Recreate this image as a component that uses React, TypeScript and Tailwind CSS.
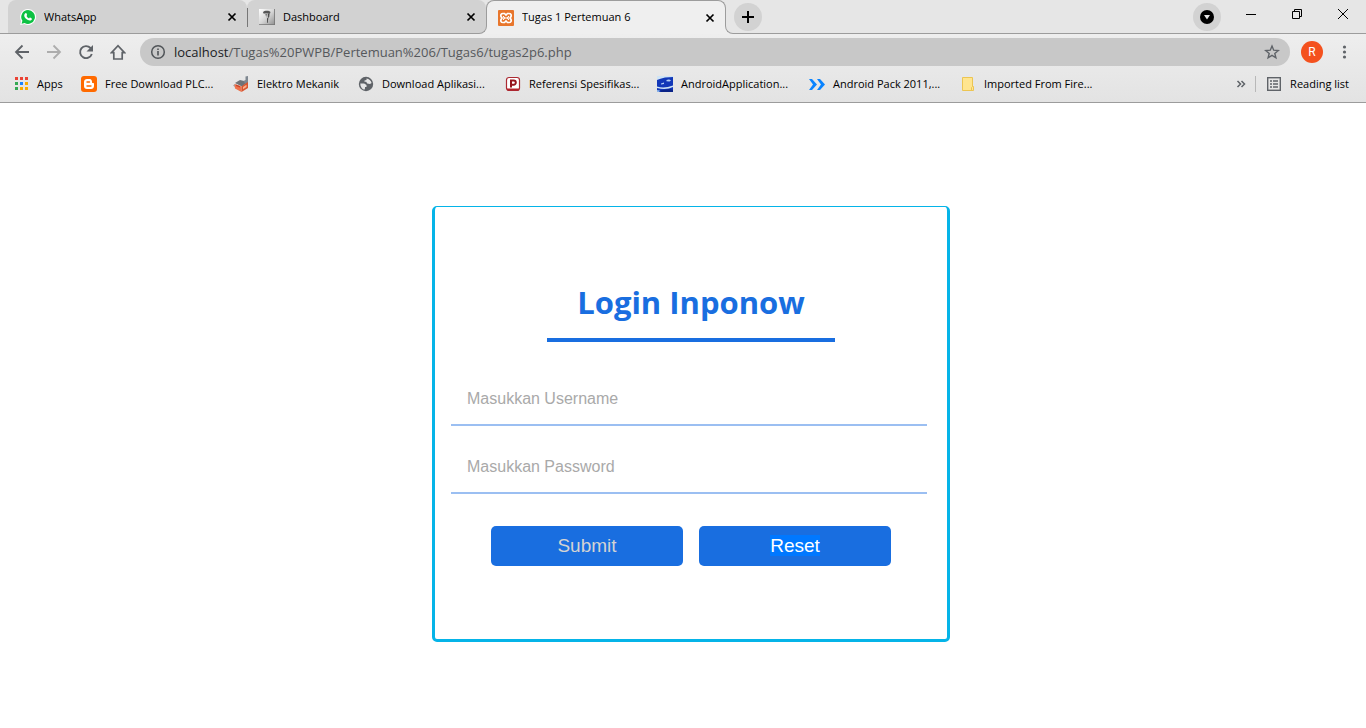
import type { ReactNode } from "react";

const ui = "font-['Open_Sans','Noto_Sans',sans-serif]";

function WhatsAppIcon() {
  return (
    <svg className="size-4" viewBox="0 0 16 16" aria-hidden="true">
      <path d="M8 0a8 8 0 1 1-3.6 15.1L.2 16l1-4A8 8 0 0 1 8 0Z" fill="#fff" />
      <path d="M8 1.1a6.9 6.9 0 1 1-3.4 12.9L1.6 14.7l.8-2.9A6.9 6.9 0 0 1 8 1.1Z" fill="#0dc143" />
      <path d="M5.4 4.3c.4-.3.9-.3 1.1.1l.6 1.4c.1.4-.5.9-.6 1.2.5 1.1 1.4 1.9 2.5 2.4.4-.1.8-.9 1.2-.8l1.5.8c.4.3.1 1.2-.3 1.6-.9.8-2.2.7-3.5.1-1.7-.8-3-2.2-3.6-3.8-.3-1.2.2-2.4 1.1-3Z" fill="#fff" />
    </svg>
  );
}

function DashboardIcon() {
  return (
    <svg className="size-4" viewBox="0 0 16 16" aria-hidden="true">
      <defs>
        <linearGradient id="portrait" x1="0" y1="0" x2="1" y2="1">
          <stop offset="0" stopColor="#fff" />
          <stop offset="0.5" stopColor="#d5d5d5" />
          <stop offset="1" stopColor="#8d8d8d" />
        </linearGradient>
      </defs>
      <path d="M0 0h16v16H0z" fill="url(#portrait)" />
      <path d="M4 3.2C5 1.6 10 1.200 11.500 3L11 4.800 4.500 4.500Z" fill="#555" />
      <path d="M6 4.600h4.500L10.200 8 8.500 10 7 7.500Z" fill="#b5b5b5" />
      <path d="M9 4.600h1.500L10.200 8l-1 1ZM6.500 5.500H8v.8H6.500ZM8 9l1.500.5L9 11v3l-.8-.5Z" fill="#444" />
      <path d="M0 15.200h16v.8H0zM15.200 0h.8v16h-.8z" fill="#777" />
    </svg>
  );
}

function XamppIcon() {
  return (
    <svg className="size-4" viewBox="0 0 16 16" aria-hidden="true">
      <rect width="16" height="16" rx="1" fill="#e8762c" />
      <path d="M5 3.500h1.500L8 5l1.500-1.500H11c2 0 2.500 1.500 2 3L12 8l1 1.500c.5 1.500 0 3-2 3H9.500L8 11l-1.500 1.500H5c-2 0-2.500-1.500-2-3L4 8 3 6.500c-.5-1.500 0-3 2-3Z" fill="none" stroke="#fff" strokeWidth="1.700" />
      <path d="M5.500 6v1l1.500 1-1.500 1v1M10.500 6v1L9 8l1.500 1v1M7 8h2" fill="none" stroke="#fff" strokeWidth="1.100" />
    </svg>
  );
}

function CloseIcon() {
  return (
    <svg className="size-4" viewBox="0 0 16 16" fill="none" stroke="#000" strokeWidth="1.700" aria-hidden="true">
      <path d="m4.500 4.500 7 7m0-7-7 7" />
    </svg>
  );
}

function Tab({ icon, title, active }: { icon: ReactNode; title: string; active?: boolean }) {
  return (
    <div
      className={
        active
          ? "relative z-10 -mb-px flex h-[34px] w-[240px] min-w-0 items-center rounded-t-lg border-x border-t border-[#9c9c9c] bg-[#efefef] pl-[11px] pr-[7px]"
          : "flex h-[33px] w-[239px] min-w-0 items-center rounded-t-lg bg-[#d2d2d2] pl-3 pr-[7px] pt-px"
      }
    >
      {active && (
        <>
          <span className="absolute -left-[9px] bottom-0 size-[9px] bg-[#efefef]">
            <span className="block size-full rounded-br-lg border-b border-r border-[#9c9c9c] bg-[#d2d2d2]" />
          </span>
          <span className="absolute -right-[9px] bottom-0 size-[9px] bg-[#efefef]">
            <span className="block size-full rounded-bl-lg border-b border-l border-[#9c9c9c] bg-[#e6e6e6]" />
          </span>
        </>
      )}
      {icon}
      <span className="ml-2 flex-1 truncate text-[11px]">{title}</span>
      <button type="button" aria-label={"Close " + title}>
        <CloseIcon />
      </button>
    </div>
  );
}

const appColors = ["#ea4335", "#ea4335", "#ea4335", "#34a853", "#1a84ff", "#f9ab00", "#34a853", "#f9ab00", "#f9ab00"];

function AppsIcon() {
  return (
    <svg className="size-4" viewBox="0 0 16 16" shapeRendering="crispEdges" aria-hidden="true">
      {appColors.map((c, i) => (
        <rect key={i} x={2 + (i % 3) * 5} y={1 + Math.floor(i / 3) * 5} width="3" height="3" fill={c} />
      ))}
    </svg>
  );
}

function BloggerIcon() {
  return (
    <svg className="size-4" viewBox="0 0 16 16" aria-hidden="true">
      <rect width="16" height="16" rx="3" fill="#ff6a00" />
      <path d="M6 3h2.500C10.500 3 11 4.500 11 6c0 1 .3 1 1 1s1 .4 1 1v2c0 2-1.300 3-3 3H6c-2 0-3-1.300-3-3V6c0-2 1.300-3 3-3Z" fill="#fff" />
      <path d="M6 6h2.500M6 10h4" stroke="#ff6a00" strokeWidth="1.400" strokeLinecap="round" />
    </svg>
  );
}

function FactoryIcon() {
  return (
    <svg className="size-4" viewBox="0 0 16 16" aria-hidden="true">
      <path d="M0 9.500 2 8l5 5v2Z" fill="#a5a5a5" />
      <path d="m2 7 5-3 8 2-6 4.500Z" fill="#6f7378" />
      <path d="m1.500 8 7 2.500V16L2 12.500Z" fill="#f0714a" />
      <path d="m8.500 10.500 6.500-5V12l-6.500 4Z" fill="#d8552f" />
      <path d="m10.500 5 2-1V.5L15 0v6l-3 1.500Z" fill="#7e8790" />
      <path d="m10 11 3.500-2.300V11L10 13.200Z" fill="#fbb18c" />
      <path d="m3 8.500 4 1.500v1.500L3 10Z" fill="#c8452a" />
    </svg>
  );
}

function GlobeIcon() {
  return (
    <svg className="size-4" viewBox="0 0 16 16" aria-hidden="true">
      <circle cx="8" cy="8" r="7.200" fill="#5f6368" />
      <path d="M2.300 7.500h3.900l2.300 1.400v2H7v1.600l-.7 1.200C4 13 2.200 10.700 2.300 7.500ZM8.500 2.500c2.500.3 4.500 2 5.100 4.500l-1.600 1-2.800-.5-1-1.700H6.500V4.500l2-.5Z" fill="#e6e6e6" />
    </svg>
  );
}

function PIcon() {
  return (
    <svg className="size-4" viewBox="0 0 16 16" aria-hidden="true">
      <rect x="1.500" y="1.500" width="13" height="13" rx="2.500" fill="#fff" stroke="#ab2a32" strokeWidth="1.200" />
      <path d="M2 12.500h12v1.700H2z" fill="#b4222b" />
      <path d="M6 11.500V4.500h2.700a2.100 2.100 0 0 1 0 4.200H6" fill="none" stroke="#96141d" strokeWidth="2" />
    </svg>
  );
}

function BlueIcon() {
  return (
    <svg className="size-4" viewBox="0 0 16 16" aria-hidden="true">
      <path d="M0 0h16v16H0z" fill="#1238b8" />
      <path d="M0 0h16v1L8 1.500Q3 2.500 0 4ZM0 10.500q7 2.500 16-1v1.500Q9 14.500 0 12Z" fill="#cfe4f5" />
      <path d="M9.500 4q3-1 4.500.5l-1.500 1-3-.2ZM4 7.500 7 6.500V8L4 8.500Z" fill="#b5d0f5" />
      <path d="M3 14.500 12 13l4 1v2H4Z" fill="#0a2387" />
      <path d="m0 14 3 .5L2 16H0Z" fill="#8bb4e8" />
    </svg>
  );
}

function ChevronsIcon() {
  return (
    <svg className="size-4" viewBox="0 0 16 16" aria-hidden="true">
      <path d="M0 3h3l5 5.500L3 14H0l4-5.500ZM8 3h3l5 5.500L11 14H8l4-5.500Z" fill="#0a84ff" />
    </svg>
  );
}

function FolderIcon() {
  return (
    <svg className="size-4" viewBox="0 0 16 16" aria-hidden="true">
      <path d="M2.500 1.500h10v9h1v4h-11Z" fill="#ffe58f" stroke="#ecc552" />
      <path d="M11.500 14.500v-3l1-1" fill="none" stroke="#ecc552" />
    </svg>
  );
}

const bookmarks: { label: string; icon: ReactNode; width: string }[] = [
  { label: "Apps", icon: <AppsIcon />, width: "w-[68px]" },
  { label: "Free Download PLC...", icon: <BloggerIcon />, width: "w-[152px]" },
  { label: "Elektro Mekanik", icon: <FactoryIcon />, width: "w-[125px]" },
  { label: "Download Aplikasi...", icon: <GlobeIcon />, width: "w-[147px]" },
  { label: "Referensi Spesifikas...", icon: <PIcon />, width: "w-[152px]" },
  { label: "AndroidApplication...", icon: <BlueIcon />, width: "w-[152px]" },
  { label: "Android Pack 2011,...", icon: <ChevronsIcon />, width: "w-[151px]" },
  { label: "Imported From Fire...", icon: <FolderIcon />, width: "w-[152px]" },
];

function Browser() {
  return (
    <header className={"text-black " + ui}>
      <div className="flex h-[34px] items-start border-b border-[#9c9c9c] bg-[#e6e6e6] pl-2">
        <Tab icon={<WhatsAppIcon />} title="WhatsApp" />
        <div className="relative">
          <span className="absolute left-0 top-2 h-[19px] w-px bg-[#777]" />
          <Tab icon={<DashboardIcon />} title="Dashboard" />
        </div>
        <Tab icon={<XamppIcon />} title="Tugas 1 Pertemuan 6" active />
        <button type="button" aria-label="New tab" className="ml-2 mt-[3px] flex size-7 items-center justify-center rounded-full bg-[#d2d2d2]">
          <svg className="size-4" viewBox="0 0 16 16" aria-hidden="true">
            <path d="M7 2h2v5h5v2H9v5H7V9H2V7h5Z" />
          </svg>
        </button>
        <div className="ml-auto flex items-start">
          <button type="button" aria-label="Search tabs" className="mr-[7px] mt-[3px] flex size-7 items-center justify-center rounded-full bg-[#d2d2d2]">
            <svg className="size-4" viewBox="0 0 16 16" aria-hidden="true">
              <circle cx="8" cy="8" r="7" />
              <path d="M5 6h6l-3 4.500Z" fill="#e6e6e6" />
            </svg>
          </button>
          <button type="button" aria-label="Minimize" className="flex h-7 w-[46px] items-center justify-center">
            <svg className="size-4" viewBox="0 0 16 16" stroke="#000" aria-hidden="true">
              <path d="M3 8.500h10" />
            </svg>
          </button>
          <button type="button" aria-label="Restore" className="flex h-7 w-[46px] items-center justify-center">
            <svg className="size-4" viewBox="0 0 16 16" fill="none" stroke="#000" aria-hidden="true">
              <path d="M3.500 5.500h7v7h-7ZM5.500 5.500v-2h7v7h-2" />
            </svg>
          </button>
          <button type="button" aria-label="Close window" className="flex h-7 w-[46px] items-center justify-center">
            <svg className="size-4" viewBox="0 0 16 16" stroke="#000" aria-hidden="true">
              <path d="m3 3 10 10m0-10L3 13" />
            </svg>
          </button>
        </div>
      </div>

      <div className="border-b border-[#9c9c9c] bg-linear-to-b from-[#eeeeee] to-[#e3e3e3]">
        <div className="flex h-9 items-center pr-[14px]">
          <nav className="flex gap-4 px-[14px]">
            <button type="button" aria-label="Back">
              <svg className="size-4" viewBox="0 0 16 16" fill="none" stroke="#5f6368" strokeWidth="1.800" aria-hidden="true">
                <path d="M15 8H2.500M8.500 1.500 2 8l6.500 6.500" />
              </svg>
            </button>
            <button type="button" aria-label="Forward">
              <svg className="size-4" viewBox="0 0 16 16" fill="none" stroke="#adadad" strokeWidth="1.800" aria-hidden="true">
                <path d="M1 8h12.500M7.500 1.500 14 8l-6.500 6.500" />
              </svg>
            </button>
            <button type="button" aria-label="Reload">
              <svg className="size-4" viewBox="0 0 16 16" fill="none" stroke="#5f6368" strokeWidth="1.900" aria-hidden="true">
                <path d="M13.800 10A6 6 0 1 1 12.500 4L14 5.500" />
                <path d="M15 1v6.500H8.500Z" fill="#5f6368" stroke="none" />
              </svg>
            </button>
            <button type="button" aria-label="Home">
              <svg className="size-4" viewBox="0 0 16 16" fill="none" stroke="#5f6368" strokeWidth="1.700" aria-hidden="true">
                <path d="M1.500 8.700H3.800V15h8.400V8.700h2.300L8 1.700Z" />
              </svg>
            </button>
          </nav>
          <div className="flex h-7 flex-1 items-center rounded-full bg-[#c8c8c8] px-[10px]">
            <svg className="size-4" viewBox="0 0 16 16" fill="none" stroke="#505458" aria-hidden="true">
              <circle cx="8" cy="8" r="6.300" strokeWidth="1.500" />
              <path d="M8 7v4.500M8 4.500V6" strokeWidth="1.600" />
            </svg>
            <p className="ml-2 flex-1 pt-[2px] text-[13px] text-[#55585c]">
              <span className="text-[#202124]">localhost</span>/Tugas%20PWPB/Pertemuan%206/Tugas6/tugas2p6.php
            </p>
            <button type="button" aria-label="Bookmark this page">
              <svg className="size-4" viewBox="0 0 16 16" fill="none" stroke="#5f6368" strokeWidth="1.400" aria-hidden="true">
                <path d="m8 2 1.700 4.200 4.600.3-3.500 2.900 1.100 4.400L8 11.400l-3.900 2.400 1.100-4.400-3.500-2.900 4.600-.3Z" />
              </svg>
            </button>
          </div>
          <button type="button" aria-label="Profile" className="ml-[11px] size-[22px] rounded-full bg-[#f4511e] font-['Roboto',sans-serif] text-[12px] text-white">
            R
          </button>
          <button type="button" aria-label="Menu" className="ml-[13px]">
            <svg className="size-4" viewBox="0 0 16 16" fill="#5f6368" aria-hidden="true">
              <circle cx="8.500" cy="3" r="1.600" />
              <circle cx="8.500" cy="8" r="1.600" />
              <circle cx="8.500" cy="13" r="1.600" />
            </svg>
          </button>
        </div>

        <div className="flex h-8 items-center pb-1 pl-[13px] pr-[17px] text-[11px]">
          {bookmarks.map((b) => (
            <a key={b.label} href="#" className={"flex items-center gap-2 whitespace-nowrap " + b.width}>
              <span className="shrink-0">{b.icon}</span>
              {b.label}
            </a>
          ))}
          <button type="button" aria-label="More bookmarks" className="ml-auto">
            <svg className="size-4" viewBox="0 0 16 16" fill="none" stroke="#5f6368" strokeWidth="1.500" aria-hidden="true">
              <path d="m4.500 5 3 3-3 3M8.500 5l3 3-3 3" />
            </svg>
          </button>
          <span className="ml-[6px] h-4 w-px bg-[#b8b8b8]" />
          <a href="#" className="ml-[10px] flex items-center gap-2 whitespace-nowrap">
            <svg className="size-4" viewBox="0 0 16 16" fill="none" stroke="#5f6368" aria-hidden="true">
              <rect x="1.700" y="1.700" width="12.600" height="12.600" strokeWidth="1.400" />
              <path d="M4 5h2m1 0h5M4 8h2m1 0h5M4 11h2m1 0h5" strokeWidth="1.500" />
            </svg>
            Reading list
          </a>
        </div>
      </div>
    </header>
  );
}

export default function App() {
  return (
    <div className="flex min-h-screen flex-col bg-white">
      <Browser />
      <main className="flex flex-1 flex-col items-center pb-8 pl-4 pt-[103px]">
        <form
          className="flex w-full max-w-[518px] flex-col rounded-[5px] border-x-[3px] border-b-[3px] border-t border-[#05b4e8] px-4 py-[73px] font-['Liberation_Sans',Arial,sans-serif]"
          onSubmit={(e) => e.preventDefault()}
        >
          <h1 className={"mx-auto w-72 border-b-4 border-[#196ee0] pb-[14px] text-center text-[31px] font-bold leading-[44px] text-[#196ee0] " + ui}>
            Login Inponow
          </h1>
          <div className="mr-1 mt-[30px] flex flex-col gap-[14px]">
            <input
              type="text"
              aria-label="Username"
              placeholder="Masukkan Username"
              className="h-[54px] border-b-2 border-[#9bbff2] px-4 pt-[2px] text-[16px] outline-none placeholder:text-[#a9a9a9]"
            />
            <input
              type="password"
              aria-label="Password"
              placeholder="Masukkan Password"
              className="h-[54px] border-b-2 border-[#9bbff2] px-4 pt-[2px] text-[16px] outline-none placeholder:text-[#a9a9a9]"
            />
          </div>
          <div className="mt-8 flex justify-center gap-4">
            <button type="submit" className="h-10 w-48 rounded-[5px] bg-[#196ee0] text-[19px] text-[#d3d3d3]">
              Submit
            </button>
            <button type="reset" className="h-10 w-48 rounded-[5px] bg-[#196ee0] text-[19px] text-white">
              <span className="bg-[#0078ff]">Reset</span>
            </button>
          </div>
        </form>
      </main>
    </div>
  );
}
